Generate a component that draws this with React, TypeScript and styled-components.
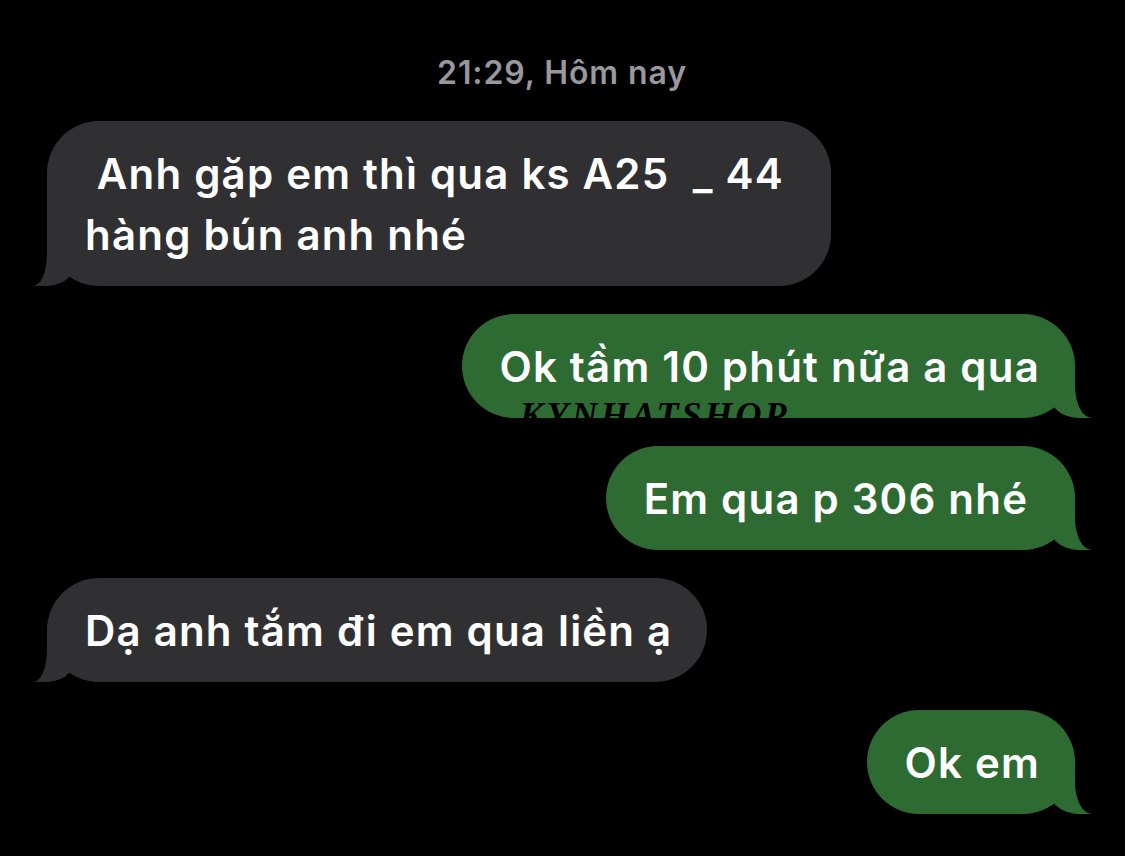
import React from "react";
import styled, { createGlobalStyle, css } from "styled-components";

const Global = createGlobalStyle`
  html, body { margin: 0; padding: 0; background: #000; }
  body { font-family: Inter, "Noto Sans", "DejaVu Sans", sans-serif; -webkit-font-smoothing: antialiased; }
`;

const Screen = styled.div`
  width: 1125px;
  height: 856px;
  background: #000;
  display: flex;
  flex-direction: column;
  padding: 55px 50px 0 47px;
  box-sizing: border-box;
  overflow: hidden;
`;

const Stamp = styled.div`
  align-self: center;
  margin-left: 2px;
  font-size: 32px;
  line-height: 36px;
  font-weight: 600;
  letter-spacing: 0.9px;
  color: #98989d;
  margin-bottom: 30px;
`;

const Row = styled.div<{ $out?: boolean; $gap?: number }>`
  display: flex;
  justify-content: ${(p) => (p.$out ? "flex-end" : "flex-start")};
  margin-top: ${(p) => p.$gap ?? 0}px;
`;

const GRAY = "#303032";
const GREEN = "#2e6b33";

const Bubble = styled.div<{ $out?: boolean }>`
  position: relative;
  box-sizing: border-box;
  background: ${(p) => (p.$out ? GREEN : GRAY)};
  color: #fff;
  font-size: 42px;
  font-weight: 600;
  line-height: 61px;
  letter-spacing: 1.2px;
  padding: 22px 35px 21px 38px;
  border-radius: 52px;
  white-space: pre-wrap;

  &::before,
  &::after {
    content: "";
    position: absolute;
    bottom: 0;
    height: 52px;
  }

  ${(p) =>
    p.$out
      ? css`
          &::before {
            right: -17px;
            width: 46px;
            background: ${GREEN};
            border-bottom-left-radius: 32px;
          }
          &::after {
            right: -44px;
            width: 44px;
            background: #000;
            border-bottom-left-radius: 17px 32px;
          }
        `
      : css`
          &::before {
            left: -14px;
            width: 46px;
            background: ${GRAY};
            border-bottom-right-radius: 32px;
          }
          &::after {
            left: -44px;
            width: 44px;
            background: #000;
            border-bottom-right-radius: 14px 32px;
          }
        `}
`;

const Watermark = styled.span`
  position: absolute;
  left: 58px;
  bottom: -15px;
  font-family: "Liberation Serif", serif;
  font-style: italic;
  font-weight: 700;
  font-size: 36px;
  line-height: 36px;
  letter-spacing: 3px;
  color: #000;
  z-index: 1;
  white-space: nowrap;
`;

export default function App() {
  return (
    <>
      <Global />
      <Screen>
        <Stamp>21:29, Hôm nay</Stamp>
        <Row>
          <Bubble>
            {" Anh gặp em thì qua ks A25  _ 44\u00a0"}
            <br />
            {"hàng bún anh nhé"}
          </Bubble>
        </Row>
        <Row $out $gap={28}>
          <Bubble $out>
            Ok tầm 10 phút nữa a qua
            <Watermark>KYNHATSHOP</Watermark>
          </Bubble>
        </Row>
        <Row $out $gap={28}>
          <Bubble $out>{"Em qua p 306 nhé\u00a0"}</Bubble>
        </Row>
        <Row $gap={28}>
          <Bubble>Dạ anh tắm đi em qua liền ạ</Bubble>
        </Row>
        <Row $out $gap={28}>
          <Bubble $out>Ok em</Bubble>
        </Row>
      </Screen>
    </>
  );
}
